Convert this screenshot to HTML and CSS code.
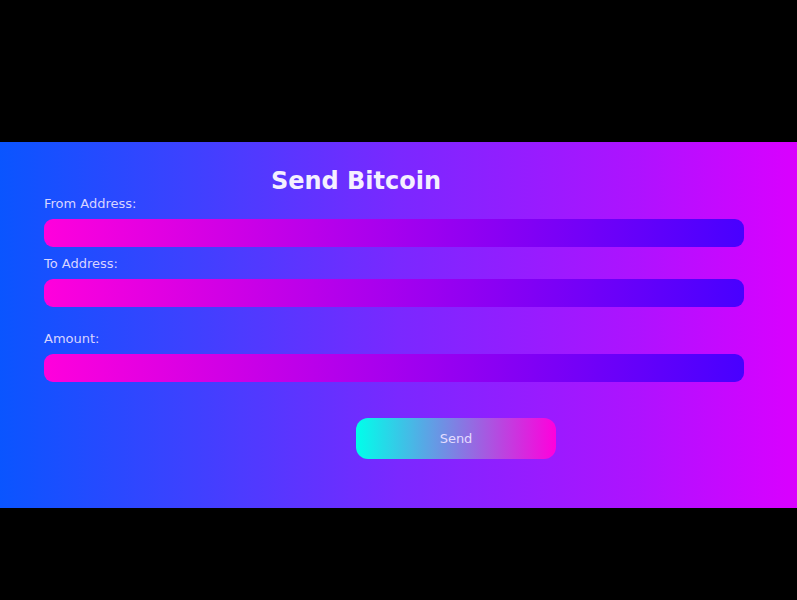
FILE: index.html
```html
<!DOCTYPE html>
<html lang="en">
<head>
<meta charset="utf-8">
<meta name="viewport" content="width=device-width, initial-scale=1">
<title>Send Bitcoin</title>
<link rel="stylesheet" href="styles.css">
</head>
<body>
<main class="panel">
  <h1 class="title">Send Bitcoin</h1>
  <form class="form">
    <div class="field">
      <label for="from">From Address:</label>
      <input id="from" type="text">
    </div>
    <div class="field">
      <label for="to">To Address:</label>
      <input id="to" type="text">
    </div>
    <div class="field field-amount">
      <label for="amount">Amount:</label>
      <input id="amount" type="text">
    </div>
    <button class="send" type="button">Send</button>
  </form>
</main>
</body>
</html>
```
FILE: styles.css
```css
* {
  box-sizing: border-box;
}

body {
  margin: 0;
  padding: 142px 0 92px;
  background: #000;
  color: #d8d4ff;
  font: 13px/18px "DejaVu Sans", Verdana, sans-serif;
}

.panel {
  padding: 25px 53px 49px 44px;
  background: linear-gradient(to right, #0a55ff, #4040ff 25%, #7a28ff 50%, #ae12ff 80%, #da00ff);
}

.title {
  margin: 0;
  padding-right: 76px;
  color: #f4f0ff;
  font-size: 24px;
  line-height: 28px;
  text-align: center;
}

.form {
  display: flex;
  flex-direction: column;
  gap: 8px;
}

.field {
  display: flex;
  flex-direction: column;
  align-items: stretch;
  gap: 6px;
}

.field label {
  align-self: flex-start;
}

.field-amount {
  margin-top: 15px;
}

.field input {
  width: 100%;
  height: 28px;
  padding: 0 10px;
  border: 0;
  border-radius: 9px;
  background: linear-gradient(to right, #ff00dc, #9c00f0 55%, #4800ff);
  color: #fff;
  font: inherit;
}

.send {
  align-self: center;
  width: 200px;
  height: 41px;
  margin: 28px 0 0 124px;
  border: 0;
  border-radius: 12px;
  background: linear-gradient(to right, #00ffea, #ff00dc);
  color: #e4dcff;
  font: inherit;
}
```
